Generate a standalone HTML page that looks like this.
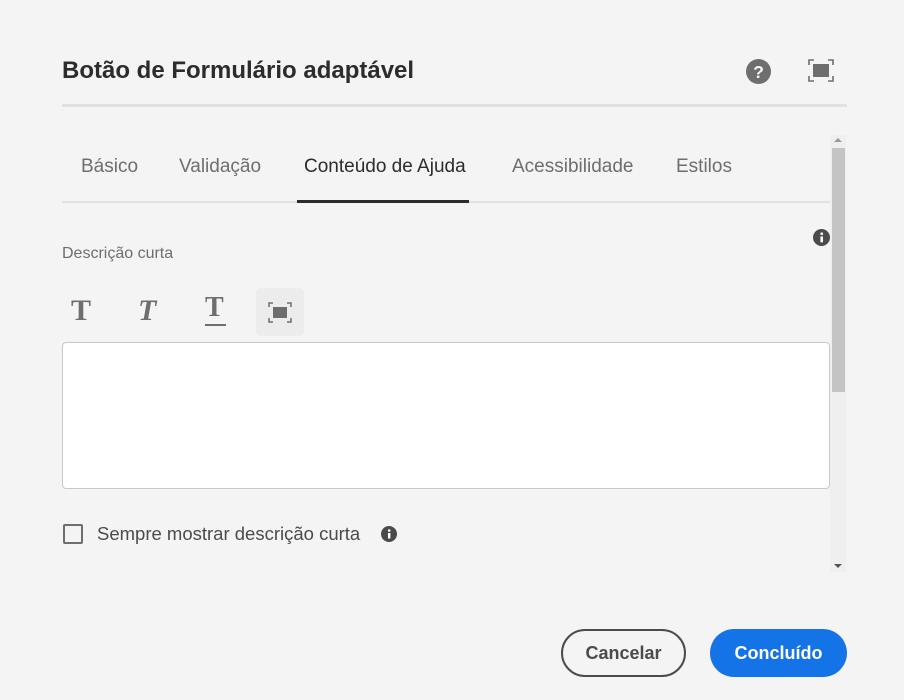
<!DOCTYPE html>
<html><head><meta charset="utf-8"><style>
body{margin:0;width:904px;height:700px;background:#f4f4f4;font-family:"Liberation Sans",sans-serif;position:relative;overflow:hidden;color:#2c2c2c}
.a{position:absolute}
.tab{position:absolute;top:156px;font-size:19px;color:#6e6e6e}
</style></head><body>
<div class="a" style="left:62px;top:57px;font-size:24px;font-weight:bold;color:#2c2c2c">Botão de Formulário adaptável</div>
<svg class="a" style="left:746px;top:59px" width="25" height="25" viewBox="0 0 24 24"><circle cx="12" cy="12" r="12" fill="#6e6e6e"/><text x="12" y="18" text-anchor="middle" font-size="17" font-weight="bold" fill="#f4f4f4" font-family="Liberation Sans">?</text></svg>
<svg class="a" style="left:808px;top:59px" width="26" height="23" viewBox="0 0 26 23"><path d="M1 6V1h5M20 1h5v5M25 17v5h-5M6 22H1v-5" stroke="#6e6e6e" stroke-width="1.6" fill="none"/><rect x="5" y="5" width="16" height="13" fill="#6e6e6e"/></svg>
<div class="a" style="left:62px;top:104px;width:785px;height:3px;background:#e1e1e1"></div>
<div class="tab" style="left:81px">Básico</div>
<div class="tab" style="left:179px">Validação</div>
<div class="tab" style="left:304px;color:#2c2c2c">Conteúdo de Ajuda</div>
<div class="tab" style="left:512px">Acessibilidade</div>
<div class="tab" style="left:676px">Estilos</div>
<div class="a" style="left:62px;top:201px;width:768px;height:2px;background:#e1e1e1"></div>
<div class="a" style="left:297px;top:200px;width:172px;height:3px;background:#2c2c2c"></div>
<div class="a" style="left:830px;top:135px;width:16px;height:437px;background:#efefef"></div>
<div class="a" style="left:832px;top:148px;width:13px;height:244px;background:#c4c4c4"></div>
<div class="a" style="left:834px;top:138px;width:0;height:0;border:4px solid transparent;border-bottom:4px solid #999;border-top:0"></div>
<div class="a" style="left:834px;top:564px;width:0;height:0;border:4px solid transparent;border-top:4px solid #555;border-bottom:0"></div>
<svg class="a" style="left:813px;top:229px" width="17" height="17" viewBox="0 0 16 16"><circle cx="8" cy="8" r="8" fill="#4b4b4b"/><rect x="7" y="7" width="2.4" height="5.5" fill="#fff"/><circle cx="8.2" cy="4.5" r="1.3" fill="#fff"/></svg>
<div class="a" style="left:62px;top:245px;font-size:16px;color:#6e6e6e">Descrição curta</div>
<div class="a" style="left:71px;top:294px;font-size:30px;font-weight:bold;font-family:'Liberation Serif',serif;color:#6e6e6e;line-height:34px">T</div>
<div class="a" style="left:138px;top:294px;font-size:30px;font-style:italic;font-weight:bold;font-family:'Liberation Serif',serif;color:#6e6e6e;line-height:34px">T</div>
<div class="a" style="left:205px;top:292px;font-size:28px;font-weight:bold;font-family:'Liberation Serif',serif;color:#6e6e6e;line-height:32px">T</div>
<div class="a" style="left:205px;top:324px;width:21px;height:2px;background:#6e6e6e"></div>
<div class="a" style="left:256px;top:288px;width:48px;height:48px;border-radius:5px;background:#ececec"></div>
<svg class="a" style="left:268px;top:302px" width="24" height="21" viewBox="0 0 24 21"><path d="M1 5V1h4M19 1h4v4M23 16v4h-4M5 20H1v-4" stroke="#6e6e6e" stroke-width="1.5" fill="none"/><rect x="5" y="5" width="14" height="11" fill="#6e6e6e"/></svg>
<div class="a" style="left:62px;top:342px;width:766px;height:145px;background:#fff;border:1px solid #c8c8c8;border-radius:4px"></div>
<div class="a" style="left:63px;top:524px;width:16px;height:16px;border:2px solid #6e6e6e;border-radius:2px"></div>
<div class="a" style="left:97px;top:523px;font-size:18.5px;color:#4b4b4b">Sempre mostrar descrição curta</div>
<svg class="a" style="left:381px;top:526px" width="16" height="16" viewBox="0 0 16 16"><circle cx="8" cy="8" r="8" fill="#4b4b4b"/><rect x="7" y="7" width="2.4" height="5.5" fill="#fff"/><circle cx="8.2" cy="4.5" r="1.3" fill="#fff"/></svg>
<div class="a" style="left:561px;top:629px;width:121px;height:44px;border:2px solid #4b4b4b;border-radius:24px;font-size:18px;font-weight:bold;color:#4b4b4b;text-align:center;line-height:44px">Cancelar</div>
<div class="a" style="left:710px;top:629px;width:137px;height:48px;background:#1473e6;border-radius:24px;font-size:18px;font-weight:bold;color:#fff;text-align:center;line-height:48px">Concluído</div>
</body></html>
